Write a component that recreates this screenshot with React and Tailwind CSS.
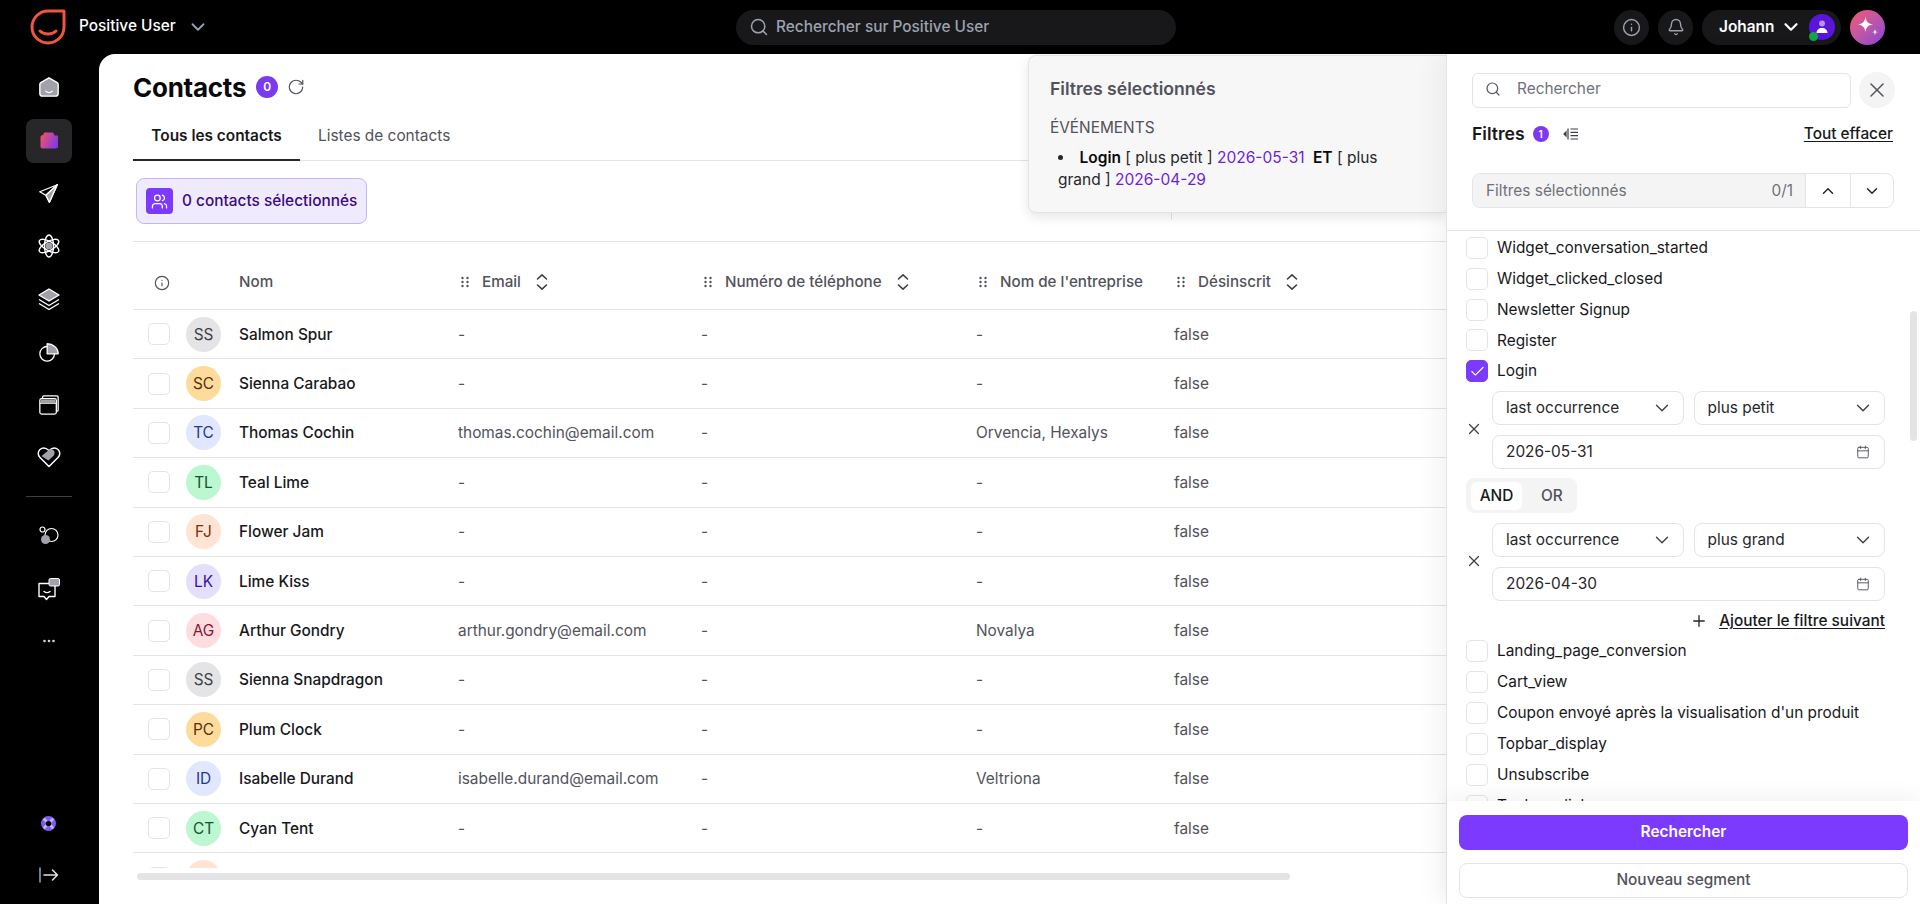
import React from "react";
import { Search, Info, Bell, ChevronDown, ChevronUp, X, Plus, Check, Calendar, RotateCw, Users } from "lucide-react";

const contacts = [
    { initials: "SS", name: "Salmon Spur", tone: "bg-[#e4e4e7] text-[#3f3f46]" },
    { initials: "SC", name: "Sienna Carabao", tone: "bg-[#fddc9b] text-[#5f2c0c]" },
    { initials: "TC", name: "Thomas Cochin", tone: "bg-[#e0e7ff] text-[#1e3a8a]", email: "thomas.cochin@email.com", company: "Orvencia, Hexalys" },
    { initials: "TL", name: "Teal Lime", tone: "bg-[#bbf7d0] text-[#14532d]" },
    { initials: "FJ", name: "Flower Jam", tone: "bg-[#ffe4d3] text-[#7c2d12]" },
    { initials: "LK", name: "Lime Kiss", tone: "bg-[#e3dffc] text-[#3b0f9e]" },
    { initials: "AG", name: "Arthur Gondry", tone: "bg-[#fedde1] text-[#881337]", email: "arthur.gondry@email.com", company: "Novalya" },
    { initials: "SS", name: "Sienna Snapdragon", tone: "bg-[#e4e4e7] text-[#3f3f46]" },
    { initials: "PC", name: "Plum Clock", tone: "bg-[#fddc9b] text-[#5f2c0c]" },
    { initials: "ID", name: "Isabelle Durand", tone: "bg-[#e0e7ff] text-[#1e3a8a]", email: "isabelle.durand@email.com", company: "Veltriona" },
    { initials: "CT", name: "Cyan Tent", tone: "bg-[#bbf7d0] text-[#14532d]" },
];

const Grip = () => (
    <svg width="10" height="12" viewBox="0 0 10 12" fill="#52525b" className="shrink-0">
        <circle cx="2.5" cy="2" r="1.2" /><circle cx="7.5" cy="2" r="1.2" />
        <circle cx="2.5" cy="6" r="1.2" /><circle cx="7.5" cy="6" r="1.2" />
        <circle cx="2.5" cy="10" r="1.2" /><circle cx="7.5" cy="10" r="1.2" />
    </svg>
);

const Sort = () => (
    <svg width="14" height="18" viewBox="0 0 14 18" fill="none" stroke="#3f3f46" strokeWidth="1.6" strokeLinecap="round" strokeLinejoin="round" className="shrink-0">
        <path d="M2.5 6 7 1.8 11.5 6" /><path d="M2.5 12 7 16.2 11.5 12" />
    </svg>
);

const Box = ({ checked }) => (
    <span className={`flex size-[22px] shrink-0 items-center justify-center rounded-[5px] border ${checked ? "border-[#7c3aff] bg-[#7c3aff]" : "border-[#e4e4e7] bg-white"}`}>
        {checked && <Check size={17} color="#fff" strokeWidth={1.5} />}
    </span>
);

const NavItem = ({ active, children }) => (
    <div className={`flex h-[44px] w-[46px] shrink-0 items-center justify-center rounded-lg ${active ? "mt-px bg-[#27272a]" : ""}`}>
        {children}
    </div>
);

const Sidebar = () => (
    <aside className="flex w-[99px] shrink-0 flex-col items-center pb-[7px] pt-[11px] pr-[2px]">
        <div className="flex flex-col items-center gap-[8.75px]">
            <NavItem>
                <svg width="22" height="22" viewBox="0 0 24 24">
                    <path d="M12 2 21 7.2c.7.4 1 1 1 1.8V19c0 1.7-1.3 3-3 3H5c-1.700 0-3-1.300-3-3V9c0-.8.3-1.400 1-1.800Z" fill="#a1a1aa" stroke="#fff" strokeWidth="1.500" />
                    <path d="M8.500 16.500c2 2 5 2 7 0" fill="none" stroke="#fff" strokeWidth="1.500" strokeLinecap="round" />
                </svg>
            </NavItem>
            <NavItem active>
                <svg width="20" height="17" viewBox="0 0 20 17">
                    <defs>
                        <linearGradient id="folderFill" x1="0" y1="0.3" x2="1" y2="0.7">
                            <stop offset="0" stopColor="#f0506a" />
                            <stop offset="1" stopColor="#7c3aed" />
                        </linearGradient>
                    </defs>
                    <path d="M1.500 5.500C1.500 4 2.500 3 4 3h.5V2C4.500 1 5.300.5 6 .5h7c1 0 1.700.6 2 1.500l.5 1.500H18c.7 0 1 .5 1 1.200V14.500c0 1.200-.8 2-2 2H3.500c-1.200 0-2-.8-2-2Z" fill="url(#folderFill)" />
                </svg>
            </NavItem>
            <NavItem>
                <svg width="21" height="21" viewBox="0 0 24 24" fill="none" stroke="#fff" strokeWidth="1.500" strokeLinejoin="round">
                    <path d="M22 2 2 10l7 4 4 8Z" /><path d="M22 2 9 14" /><path d="M22 2 13 22l-4-8Z" fill="#a1a1aa" />
                </svg>
            </NavItem>
            <NavItem>
                <svg width="24" height="24" viewBox="0 0 24 24" fill="none" stroke="#fff" strokeWidth="1.400">
                    <ellipse cx="12" cy="12" rx="4.500" ry="11" />
                    <ellipse cx="12" cy="12" rx="4.500" ry="11" transform="rotate(60 12 12)" />
                    <ellipse cx="12" cy="12" rx="4.500" ry="11" transform="rotate(120 12 12)" />
                    <circle cx="12" cy="12" r="3.500" fill="#a1a1aa" stroke="none" />
                </svg>
            </NavItem>
            <NavItem>
                <svg width="24" height="24" viewBox="0 0 24 24" fill="none" stroke="#fff" strokeWidth="1.400" strokeLinejoin="round">
                    <path d="M12 2 22 8l-10 6L2 8Z" fill="#a1a1aa" />
                    <path d="m2 12.500 10 6 10-6" /><path d="m2 16.500 10 6 10-6" />
                </svg>
            </NavItem>
            <NavItem>
                <svg width="22" height="22" viewBox="0 0 24 24" fill="none" stroke="#fff" strokeWidth="1.400" strokeLinejoin="round">
                    <circle cx="10" cy="14" r="8" />
                    <path d="M10 14V3c6 0 12 4 12 11Z" fill="#a1a1aa" />
                </svg>
            </NavItem>
            <NavItem>
                <svg width="22" height="22" viewBox="0 0 24 24" fill="none" stroke="#fff" strokeWidth="1.400">
                    <path d="M5 4.500V3.500C5 2.500 5.700 2 6.500 2h14C21.500 2 22 2.700 22 3.500v14c0 1-.7 1.500-1.500 1.500H20" />
                    <rect x="2" y="5" width="18" height="17" rx="2" />
                    <path d="M2 10h18" /><path d="M3 6h16v4H3Z" fill="#a1a1aa" stroke="none" />
                </svg>
            </NavItem>
            <NavItem>
                <svg width="24" height="22" viewBox="0 0 24 22" fill="none" stroke="#fff" strokeWidth="1.500" strokeLinejoin="round">
                    <path d="M12 20.500 3 11.500C.5 9 .8 5.500 3 3.500c2.500-2 5.500-2 9 1 3.500-3 6.500-3 9-1 2.200 2 2.500 5.500 0 8Z" />
                    <path d="M4.500 10 12.500 3.500c2.500-.8 4.500.5 5 2.500.3 1.500-.2 3-1.200 4L12 14c-.5.500-1 .5-1.500 0Z" fill="#a1a1aa" stroke="none" />
                </svg>
            </NavItem>
            <div className="my-[8px] h-px w-[46px] bg-[#3f3f46]" />
            <NavItem>
                <svg width="20" height="20" viewBox="0 0 20 20" fill="none" stroke="#fff" strokeWidth="1.200">
                    <circle cx="3.500" cy="3.500" r="2.500" />
                    <circle cx="12.500" cy="9" r="6.500" />
                    <circle cx="6.500" cy="13.500" r="4.500" fill="#a1a1aa" stroke="none" />
                </svg>
            </NavItem>
            <NavItem>
                <svg width="24" height="24" viewBox="0 0 24 24" fill="none" stroke="#fff" strokeWidth="1.400" strokeLinejoin="round">
                    <path d="M2 6.500h16v13h-6l-2.500 3-2.500-3H2Z" />
                    <rect x="12" y="1.500" width="10.500" height="7.500" rx="1.500" fill="#a1a1aa" stroke="#fff" strokeWidth="1" />
                    <path d="M7 14.500c2 1.500 4 1.500 6 0" strokeLinecap="round" />
                </svg>
            </NavItem>
            <NavItem>
                <svg width="12" height="4" viewBox="0 0 12 4" fill="#d4d4d8">
                    <circle cx="1.500" cy="2" r="1.300" /><circle cx="6" cy="2" r="1.300" /><circle cx="10.500" cy="2" r="1.300" />
                </svg>
            </NavItem>
        </div>
        <div className="mt-auto flex flex-col items-center gap-[8px]">
            <NavItem>
                <svg width="15" height="15" viewBox="0 0 16 16">
                    <circle cx="8" cy="8" r="8" fill="#7c5cf0" />
                    <path d="M3 3 6 6M13 3l-3 3M3 13l3-3M13 13l-3-3" stroke="#c4b5fd" strokeWidth="3" />
                    <circle cx="8" cy="8" r="2.800" fill="#000" />
                </svg>
            </NavItem>
            <NavItem>
                <svg width="20" height="16" viewBox="0 0 20 16" fill="none" strokeWidth="1.500" strokeLinecap="round" strokeLinejoin="round">
                    <path d="M1 1v14" stroke="#94a3b8" />
                    <path d="M5 8h13.500M13.500 3l5 5-5 5" stroke="#e4e4e7" />
                </svg>
            </NavItem>
        </div>
    </aside>
);

const TopBar = () => (
    <header className="flex h-[54px] shrink-0 items-center">
        <div className="flex w-[736px] items-center pl-[30px]">
            <svg width="36" height="36" viewBox="0 0 36 36" fill="none" stroke="#f0553f" strokeWidth="3" strokeLinecap="round" strokeLinejoin="round">
                <path d="M18 2h16v16a16 16 0 1 1-16-16Z" />
                <path d="M10 22c4 4 12 4 16 0" />
            </svg>
            <span className="ml-[13px] pb-[2px] text-[15.4px] font-medium text-white">Positive User</span>
            <ChevronDown size={22} color="#94a3b8" strokeWidth={2} className="ml-[11px]" />
        </div>
        <div className="flex h-[35px] w-[440px] items-center gap-[7px] rounded-full bg-[#18181b] pl-[13px]">
            <Search size={20} color="#9ca3af" strokeWidth={1.800} />
            <span className="text-[15.4px] font-medium text-[#9ca3af]">Rechercher sur Positive User</span>
        </div>
        <div className="flex flex-1 items-center justify-end gap-[9px] pr-[35px]">
            <div className="flex size-[35px] items-center justify-center rounded-full bg-[#18181b]">
                <Info size={19} color="#9ca3af" strokeWidth={1.800} />
            </div>
            <div className="flex size-[35px] items-center justify-center rounded-full bg-[#18181b]">
                <Bell size={18} color="#9ca3af" strokeWidth={1.800} />
            </div>
            <div className="flex h-[35px] w-[139px] items-center rounded-full bg-[#18181b] pl-[17px]">
                <span className="pb-px text-[15.4px] font-semibold text-white">Johann</span>
                <ChevronDown size={22} color="#fff" strokeWidth={2.400} className="ml-[6px]" />
                <div className="relative ml-[7px] flex size-[26px] items-center justify-center rounded-full bg-[#5b14d9]">
                    <svg width="14" height="14" viewBox="0 0 14 14">
                        <circle cx="7" cy="3.500" r="3" fill="#b794f6" />
                        <path d="M1.500 13c0-3 2.500-5 5.500-5s5.500 2 5.500 5Z" fill="#fff" />
                    </svg>
                    <span className="absolute bottom-[-1px] left-0 size-[9px] rounded-full bg-[#16a34a]" />
                </div>
            </div>
            <div className="flex size-[35px] items-center justify-center rounded-full bg-gradient-to-br from-[#f5566a] to-[#8b3fd9]">
                <svg width="28" height="28" viewBox="0 0 22 22" fill="#fff">
                    <path d="M9 3c.6 4 2 5.500 6 6-4 .6-5.400 2-6 6-.6-4-2-5.400-6-6 4-.5 5.400-2 6-6Z" />
                    <path d="M16.500 12.500c.2 1.700.8 2.300 2.500 2.500-1.700.2-2.300.8-2.500 2.500-.2-1.700-.8-2.300-2.500-2.500 1.700-.2 2.300-.8 2.500-2.500Z" />
                </svg>
            </div>
        </div>
    </header>
);

const ContactRow = ({ contact }) => (
    <div className="flex h-[49.4px] shrink-0 items-center border-b border-[#e4e4e7] text-[15.4px] text-[#52525b]">
        <div className="w-[53px] shrink-0 pl-[15px]"><Box /></div>
        <div className={`flex size-[35px] shrink-0 items-center justify-center rounded-full text-[15.4px] ${contact.tone}`}>{contact.initials}</div>
        <div className="ml-[18px] w-[219px] shrink-0 text-[#18181b] [font-weight:450]">{contact.name}</div>
        <div className="w-[243px] shrink-0">{contact.email || "-"}</div>
        <div className="w-[275px] shrink-0">-</div>
        <div className="w-[198px] shrink-0">{contact.company || "-"}</div>
        <div>false</div>
    </div>
);

const HeadCell = ({ label, width }) => (
    <div className={`flex shrink-0 items-center ${width}`}>
        <Grip />
        <span className="ml-3">{label}</span>
        <span className="ml-[14px]"><Sort /></span>
    </div>
);

const ContactsView = () => (
    <main className="relative flex min-w-0 flex-1 flex-col overflow-hidden rounded-tl-[16px] bg-white pl-[34px]">
        <div className="mt-[15px] flex h-[36px] shrink-0 items-center">
            <h1 className="text-[26px] font-bold tracking-[-0.01em] text-[#09090b]">Contacts</h1>
            <span className="ml-[10px] flex size-[22px] items-center justify-center rounded-full bg-[#7c3aed] text-xs font-semibold text-white">0</span>
            <RotateCw size={18} color="#52525b" strokeWidth={1.600} className="ml-[9px]" />
        </div>
        <div className="mt-[9px] flex h-[47px] shrink-0 border-b border-[#e4e4e7] text-[15.4px]">
            <div className="flex h-[47px] w-[167px] items-center justify-center border-b-2 border-[#27272a] pb-[2px] font-semibold text-[#18181b]">Tous les contacts</div>
            <div className="ml-[18px] flex h-[44px] items-center text-[#52525b]">Listes de contacts</div>
        </div>
        <div className="relative mt-[17px] h-[46px] shrink-0">
            <div className="ml-[3px] flex h-[46px] w-[231px] items-center rounded-lg border border-[#c4b5fd] bg-[#f0ebfc] pl-[9px]">
                <span className="flex h-[26px] w-[27px] items-center justify-center rounded-[4px] bg-[#7c3aff]">
                    <Users size={17} color="#fff" strokeWidth={1.800} />
                </span>
                <span className="ml-[9px] text-[15.4px] font-medium text-[#3b0a80]">0 contacts sélectionnés</span>
            </div>
            <span className="absolute left-[1038px] top-0 h-[42px] w-px bg-[#e4e4e7]" />
        </div>
        <div className="mt-[17px] h-px shrink-0 bg-[#e4e4e7]" />
        <div className="flex h-[68px] shrink-0 items-center border-b border-[#e4e4e7] pt-[14px] text-[15.2px] font-medium text-[#52525b]">
            <div className="w-[106px] shrink-0 pl-[21px]"><Info size={16} color="#52525b" strokeWidth={1.800} /></div>
            <div className="w-[221px] shrink-0">Nom</div>
            <HeadCell label="Email" width="w-[243px]" />
            <HeadCell label="Numéro de téléphone" width="w-[275px]" />
            <div className="flex w-[198px] shrink-0 items-center">
                <Grip />
                <span className="ml-3 whitespace-nowrap">Nom de l'entreprise</span>
            </div>
            <HeadCell label="Désinscrit" width="w-[150px]" />
        </div>
        <div className="flex h-[558px] shrink-0 flex-col overflow-hidden">
            {contacts.map((contact, i) => <ContactRow key={i} contact={contact} />)}
            <div className="flex shrink-0 items-center pt-[7px]">
                <div className="w-[53px] shrink-0 pl-[15px]"><Box /></div>
                <div className="size-[35px] rounded-full bg-[#ffe4d3]" />
            </div>
        </div>
        <div className="ml-[4px] mt-[5px] h-[7px] w-[1153px] shrink-0 rounded-full bg-[#e4e4e7]" />

        <div className="absolute right-0 top-px z-10 h-[158px] w-[418px] rounded-l-lg border border-r-0 border-[#e4e4e7] bg-[#f7f7f8] pl-[21px] pr-[40px] pt-[20px] shadow-[0_4px_12px_rgba(0,0,0,0.1)]">
            <div className="text-[17.6px] font-semibold text-[#52525b]">Filtres sélectionnés</div>
            <div className="mt-[14px] text-[15.4px] text-[#52525b]">ÉVÉNEMENTS</div>
            <ul className="mt-[7px] list-inside list-disc pl-2 text-[15.5px] leading-[22px] text-[#27272a]">
                <li>
                    <b className="font-semibold text-[#09090b]">Login</b> [ plus petit ] <span className="text-[#6d1fe0]">2026-05-31</span> <b className="ml-1 font-semibold text-[#09090b]">ET</b> [ plus grand ] <span className="text-[#6d1fe0]">2026-04-29</span>
                </li>
            </ul>
        </div>
    </main>
);

const Select = ({ label }) => (
    <div className="flex h-[34px] flex-1 items-center justify-between rounded-lg border border-[#e4e4e7] pl-[13px] pr-[10px]">
        <span className="text-[15.4px] text-[#27272a]">{label}</span>
        <ChevronDown size={22} color="#3f3f46" strokeWidth={1.500} />
    </div>
);

const Condition = ({ mode, date, className = "" }) => (
    <div className={`flex items-center ${className}`}>
        <div className="mb-[3px] ml-[-1px] flex w-[27px] shrink-0"><X size={18} color="#3f3f46" strokeWidth={1.600} /></div>
        <div className="flex w-[393px] shrink-0 flex-col gap-[10px]">
            <div className="flex gap-[10px]">
                <Select label="last occurrence" />
                <Select label={mode} />
            </div>
            <div className="flex h-[34px] items-center justify-between rounded-lg border border-[#e4e4e7] pl-[13px] pr-[14px]">
                <span className="text-[15.4px] text-[#27272a]">{date}</span>
                <Calendar size={14} color="#52525b" strokeWidth={1.600} />
            </div>
        </div>
    </div>
);

const EventRow = ({ label, checked }) => (
    <div className="flex h-[22px] shrink-0 items-center gap-[9px]">
        <Box checked={checked} />
        <span className="text-[15.4px] text-[#18181b]">{label}</span>
    </div>
);

const FilterPanel = () => (
    <aside className="relative z-20 flex w-[474px] shrink-0 flex-col border-l border-[#e4e4e7] bg-white shadow-[-8px_0_24px_rgba(0,0,0,0.05)]">
        <div className="h-[177px] shrink-0 border-b border-[#e4e4e7] pl-[25px] pr-[25px] pt-[18px]">
            <div className="flex items-center gap-[8px]">
                <div className="flex h-[35px] flex-1 items-center gap-4 rounded-md border border-[#e4e4e7] pb-[2px] pl-3">
                    <Search size={16} color="#52525b" strokeWidth={1.800} />
                    <span className="text-[15.4px] text-[#71717a]">Rechercher</span>
                </div>
                <div className="flex size-[36px] items-center justify-center rounded-full bg-[#f4f4f5]">
                    <X size={24} color="#52525b" strokeWidth={1.500} />
                </div>
            </div>
            <div className="mt-[14px] flex h-[24px] items-center">
                <span className="text-[17.6px] font-semibold text-[#18181b]">Filtres</span>
                <span className="ml-2 flex size-[16px] items-center justify-center rounded-full bg-[#7c3aed] text-[10px] font-semibold text-white">1</span>
                <svg width="16" height="12" viewBox="0 0 16 12" fill="none" stroke="#3f3f46" strokeWidth="1.200" className="ml-[14px]">
                    <path d="M3 4 1 6l2 2Z" fill="#3f3f46" /><path d="M5 .5v11M7.500 1H15M7.500 4.300H15M7.500 7.700H15M7.500 11H15" />
                </svg>
                <span className="ml-auto mr-[2px] text-[15.4px] font-medium text-[#18181b] underline underline-offset-2">Tout effacer</span>
            </div>
            <div className="mr-px mt-[27px] flex h-[35px] overflow-hidden rounded-lg border border-[#e4e4e7]">
                <div className="flex flex-1 items-center justify-between bg-[#f4f4f5] pl-[13px] pr-[12px] text-[15.4px] text-[#71717a]">
                    <span>Filtres sélectionnés</span>
                    <span>0/1</span>
                </div>
                <div className="flex w-[46px] items-center justify-center border-x border-[#e4e4e7]"><ChevronUp size={18} color="#27272a" strokeWidth={2} /></div>
                <div className="flex w-[42px] items-center justify-center"><ChevronDown size={18} color="#27272a" strokeWidth={2} /></div>
            </div>
        </div>
        <div className="relative min-h-0 flex-1 overflow-hidden">
            <div className="flex flex-col gap-[9px] pl-[19px] pt-[6px]">
                <div className="flex flex-col gap-[8.75px]">
                    <EventRow label="Widget_conversation_started" />
                    <EventRow label="Widget_clicked_closed" />
                    <EventRow label="Newsletter Signup" />
                    <EventRow label="Register" />
                    <EventRow label="Login" checked />
                </div>
                <Condition mode="plus petit" date="2026-05-31" />
                <div className="flex h-[35px] w-[111px] items-center rounded-lg bg-[#f4f4f5] pl-[5px] text-[15.4px] font-medium">
                    <span className="flex h-[28px] w-[51px] items-center justify-center rounded-md bg-white text-[#18181b]">AND</span>
                    <span className="ml-[19px] text-[#52525b]">OR</span>
                </div>
                <Condition mode="plus grand" date="2026-04-30" className="mt-px" />
                <div className="mt-px flex h-[20px] w-[419px] items-center justify-end gap-[11px] text-[15.4px] font-medium text-[#18181b]">
                    <Plus size={18} color="#27272a" strokeWidth={1.800} />
                    <span className="underline underline-offset-2">Ajouter le filtre suivant</span>
                </div>
                <EventRow label="Landing_page_conversion" />
                <EventRow label="Cart_view" />
                <EventRow label="Coupon envoyé après la visualisation d'un produit" />
                <EventRow label="Topbar_display" />
                <EventRow label="Unsubscribe" />
                <EventRow label="Topbar_click" />
            </div>
            <span className="absolute right-[3px] top-[80px] h-[130px] w-[7px] rounded-full bg-[#e4e4e7]" />
        </div>
        <div className="relative flex h-[103px] shrink-0 flex-col gap-[13px] bg-white pl-[12px] pr-[12px] pt-[14px] shadow-[0_-8px_16px_rgba(0,0,0,0.04)]">
            <div className="flex h-[35px] items-center justify-center rounded-lg bg-[#7c3aff] pb-px text-[15.4px] font-semibold text-white">Rechercher</div>
            <div className="flex h-[35px] items-center justify-center rounded-lg border border-[#e4e4e7] pb-px text-[15.4px] font-medium text-[#52525b]">Nouveau segment</div>
        </div>
    </aside>
);

const App = () => {
    return (
        <div className="flex h-screen w-full flex-col overflow-hidden bg-black [font-family:Inter,sans-serif]">
            <TopBar />
            <div className="flex min-h-0 flex-1">
                <Sidebar />
                <ContactsView />
                <FilterPanel />
            </div>
        </div>
    );
};

export default App;
